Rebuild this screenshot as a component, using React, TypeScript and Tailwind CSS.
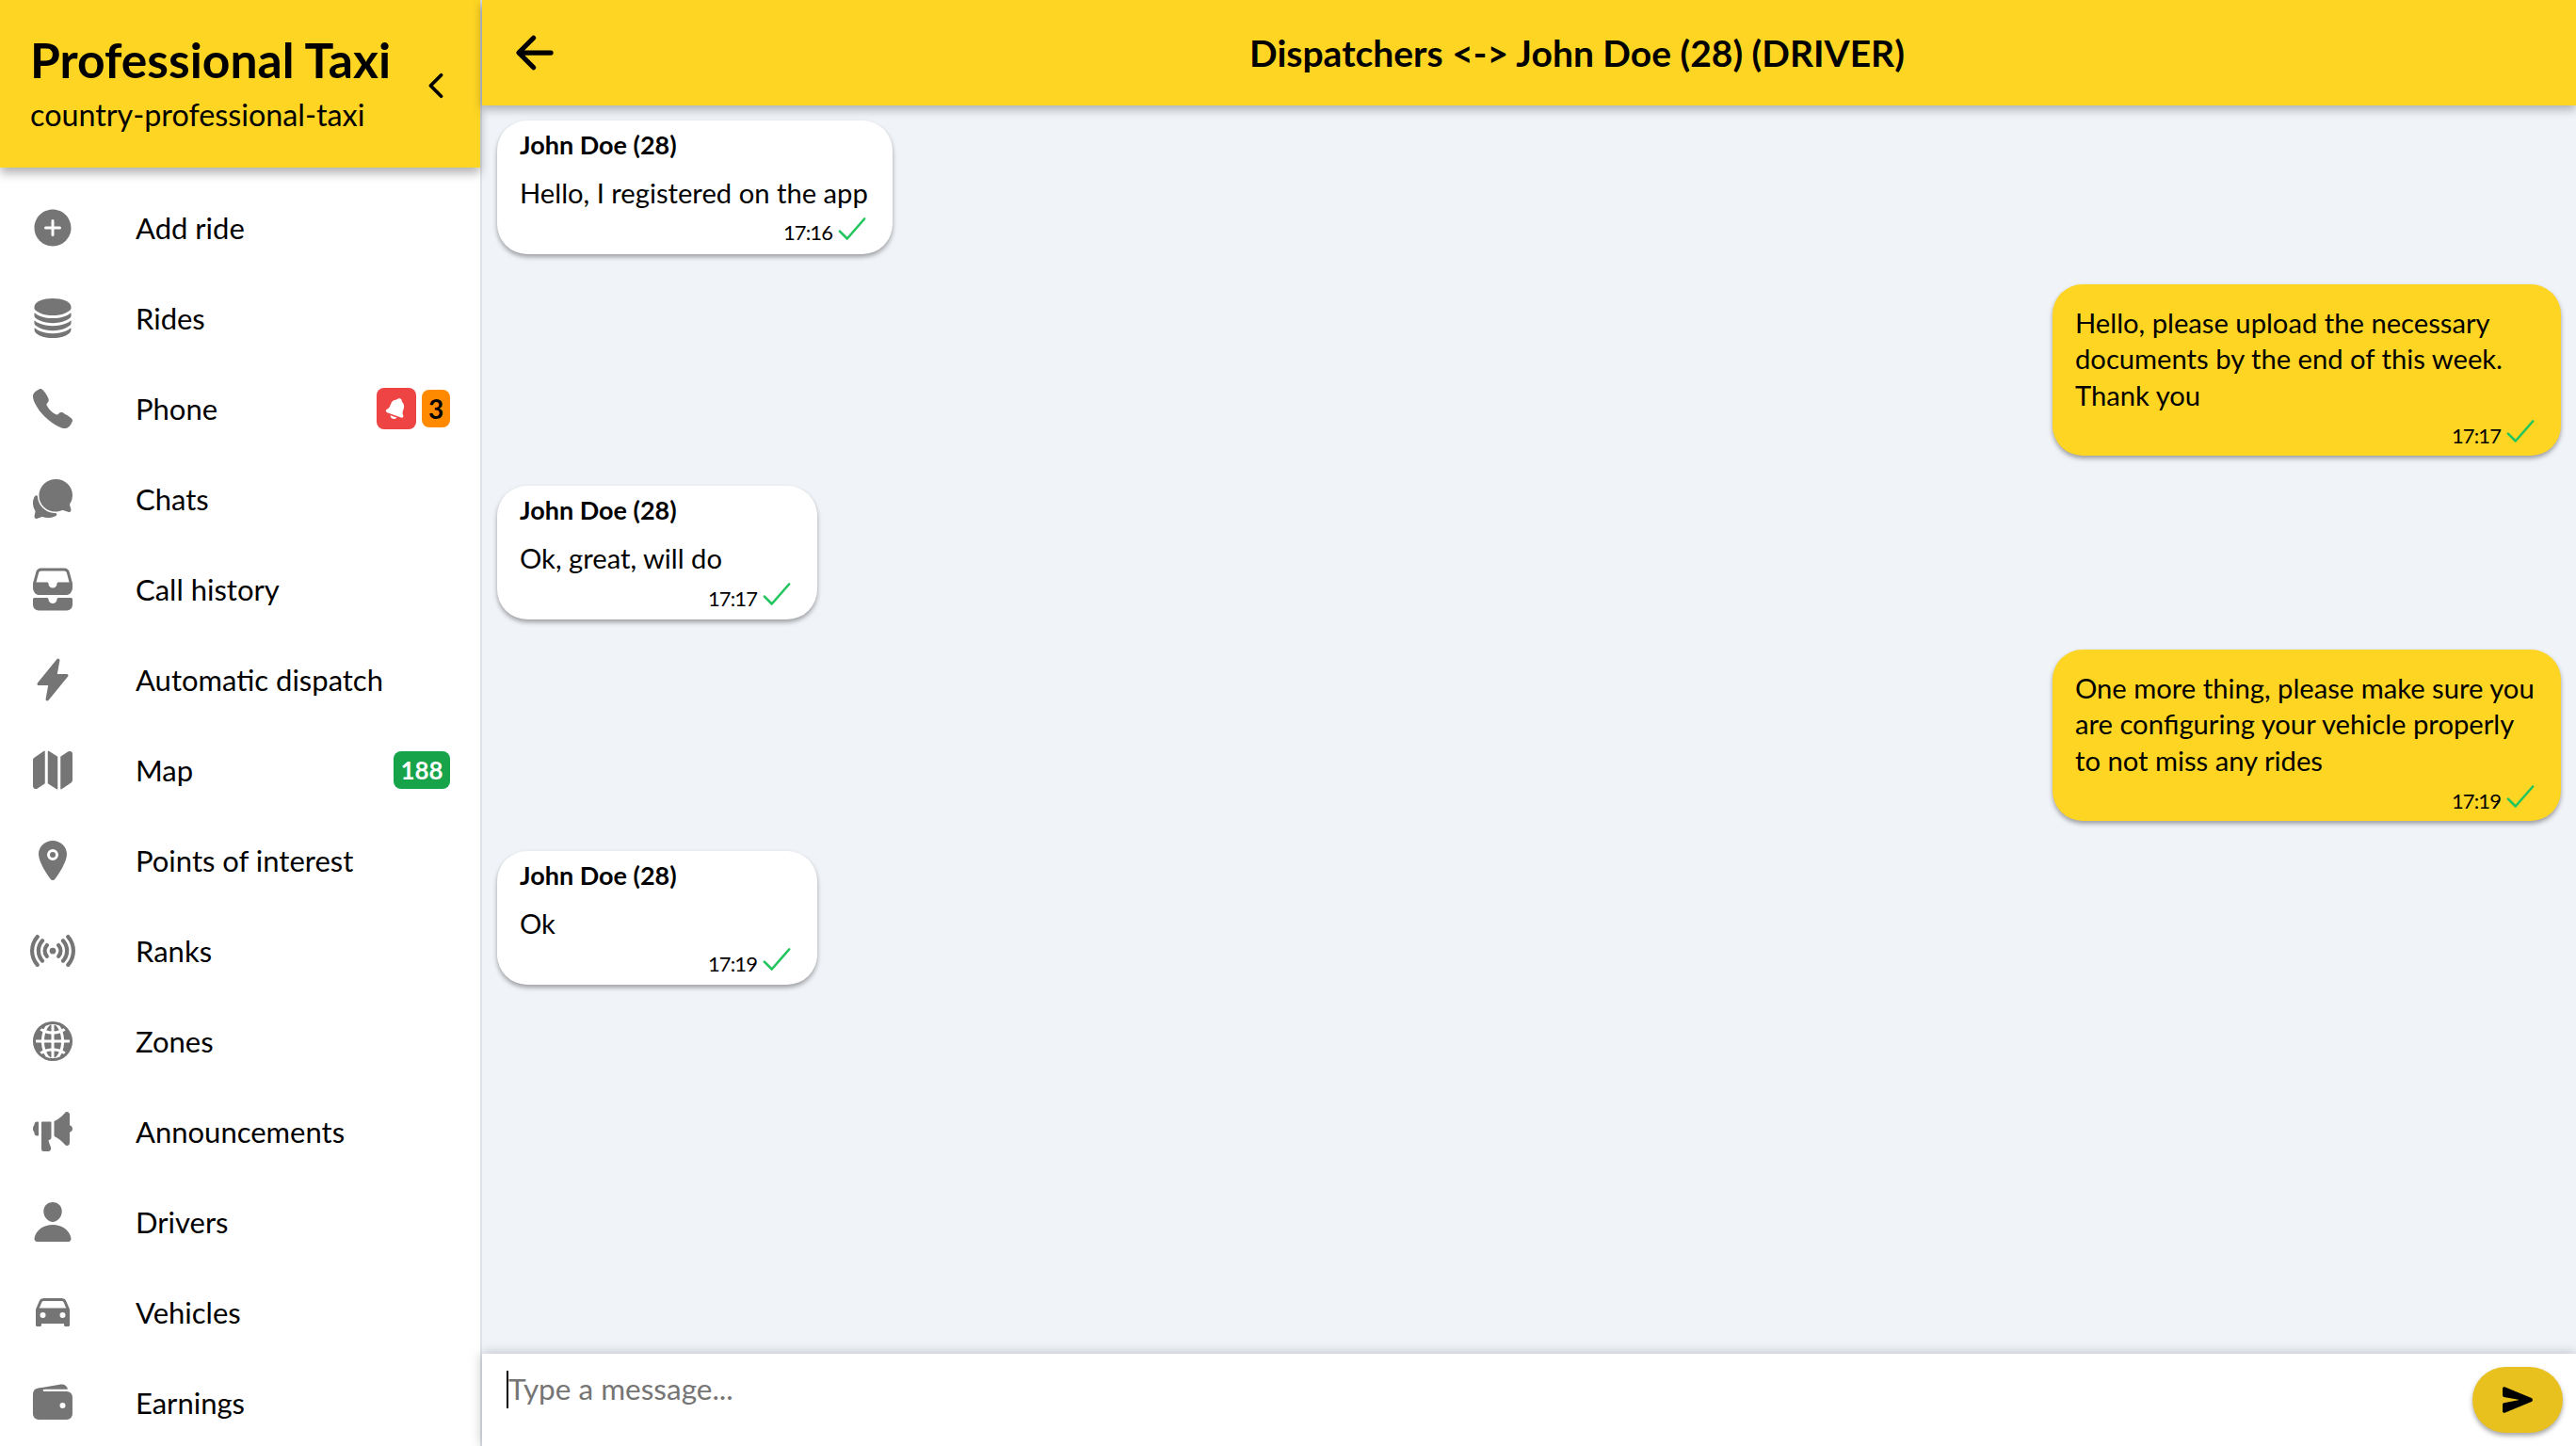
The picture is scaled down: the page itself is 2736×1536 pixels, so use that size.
import type { ReactNode } from "react";
import {
  IoAddCircle,
  IoArrowBack,
  IoCall,
  IoCar,
  IoChatbubbles,
  IoCheckmark,
  IoChevronBack,
  IoFileTrayStacked,
  IoFlash,
  IoGlobe,
  IoLocation,
  IoMap,
  IoMegaphone,
  IoNotifications,
  IoPerson,
  IoRadio,
  IoSend,
  IoServer,
  IoWallet,
} from "react-icons/io5";

const navItems: { label: string; icon: ReactNode; extra?: ReactNode }[] = [
  { label: "Add ride", icon: <IoAddCircle size={48} /> },
  { label: "Rides", icon: <IoServer size={48} /> },
  {
    label: "Phone",
    icon: <IoCall size={48} />,
    extra: (
      <div className="flex items-center gap-[6px]">
        <div className="w-[42px] h-[44px] rounded-lg bg-[#ef4444] flex items-center justify-center text-white">
          <IoNotifications size={26} className="rotate-[20deg]" />
        </div>
        <div className="w-[30px] h-[40px] rounded-lg bg-[#ff8a00] flex items-center justify-center text-[28px] font-bold text-black">
          3
        </div>
      </div>
    ),
  },
  { label: "Chats", icon: <IoChatbubbles size={48} /> },
  { label: "Call history", icon: <IoFileTrayStacked size={48} /> },
  { label: "Automatic dispatch", icon: <IoFlash size={48} /> },
  {
    label: "Map",
    icon: <IoMap size={48} />,
    extra: (
      <div className="w-[60px] h-[40px] rounded-lg bg-[#16a34a] flex items-center justify-center text-[26px] font-bold text-white">
        188
      </div>
    ),
  },
  { label: "Points of interest", icon: <IoLocation size={48} /> },
  { label: "Ranks", icon: <IoRadio size={48} /> },
  { label: "Zones", icon: <IoGlobe size={48} /> },
  { label: "Announcements", icon: <IoMegaphone size={48} /> },
  { label: "Drivers", icon: <IoPerson size={48} /> },
  { label: "Vehicles", icon: <IoCar size={48} /> },
  { label: "Earnings", icon: <IoWallet size={48} /> },
];

const messages = [
  { id: 1, mine: false, width: "w-[420px]", time: "17:16", lines: ["Hello, I registered on the app"] },
  {
    id: 2,
    mine: true,
    width: "w-[540px]",
    time: "17:17",
    lines: ["Hello, please upload the necessary", "documents by the end of this week.", "Thank you"],
  },
  { id: 3, mine: false, width: "w-[340px]", time: "17:17", lines: ["Ok, great, will do"] },
  {
    id: 4,
    mine: true,
    width: "w-[540px]",
    time: "17:19",
    lines: ["One more thing, please make sure you", "are configuring your vehicle properly", "to not miss any rides"],
  },
  { id: 5, mine: false, width: "w-[340px]", time: "17:19", lines: ["Ok"] },
];

const App = () => {
  return (
    <div className="h-screen w-full flex overflow-hidden bg-[#f0f3f8] text-black font-[Lato,sans-serif]">
      {/* sidebar */}
      <aside className="w-[512px] shrink-0 flex flex-col bg-white border-r-2 border-[#dfe3e9]">
        <div className="relative z-10 h-[178px] shrink-0 flex items-center justify-between bg-[#ffd524] pl-[32px] pr-[27px] shadow-[0_6px_10px_rgba(0,0,0,0.3)]">
          <div className="pb-[3px]">
            <div className="text-[51.6px] leading-[60px] font-bold whitespace-nowrap">Professional Taxi</div>
            <div className="text-[32.3px] leading-[42px] mt-[8px] whitespace-nowrap">country-professional-taxi</div>
          </div>
          <IoChevronBack size={40} className="shrink-0 mt-[4px]" />
        </div>
        <nav className="pt-[16px]">
          {navItems.map((item) => (
            <div key={item.label} className="h-[96px] flex items-center pl-[32px] pr-[32px]">
              <div className="w-[48px] h-[48px] text-[#757575] shrink-0">{item.icon}</div>
              <span className="ml-[64px] flex-1 text-[31px] whitespace-nowrap">{item.label}</span>
              {item.extra}
            </div>
          ))}
        </nav>
      </aside>

      {/* chat */}
      <main className="flex-1 min-w-0 flex flex-col">
        <header className="relative z-10 h-[112px] shrink-0 flex items-center bg-[#ffd524] shadow-[0_4px_10px_rgba(0,0,0,0.3)]">
          <div className="w-[102px] pl-[28px] shrink-0">
            <IoArrowBack size={56} />
          </div>
          <h1 className="flex-1 text-center text-[39px] font-bold">Dispatchers &lt;-&gt; John Doe (28) (DRIVER)</h1>
        </header>

        <div className="flex-1 min-h-0 flex flex-col gap-[32px] p-[16px] overflow-hidden">
          {messages.map((m) => (
            <div
              key={m.id}
              className={`${m.width} ${
                m.mine ? "self-end bg-[#ffd524] pt-[22px] pb-[4px]" : "self-start bg-white pt-[7px] pb-[5px]"
              } rounded-[32px] px-[24px] shadow-[0_3px_5px_rgba(0,0,0,0.35)]`}
            >
              {!m.mine && <div className="text-[27px] leading-[38px] font-bold">John Doe (28)</div>}
              <div className={`text-[29.2px] leading-[38.4px] ${m.mine ? "" : "mt-[12.5px]"}`}>
                {m.lines.map((line) => (
                  <div key={line} className="whitespace-nowrap">
                    {line}
                  </div>
                ))}
              </div>
              <div className="h-[44px] -mt-[3px] flex justify-end items-center -mr-[2px]">
                <span className="text-[22px] tracking-[-0.9px] mt-[8px] mr-[2px]">{m.time}</span>
                <IoCheckmark size={42} className="text-[#22c55e] -ml-[2px]" />
              </div>
            </div>
          ))}
        </div>

        <div className="relative z-10 h-[98px] shrink-0 flex items-start bg-white shadow-[0_0_12px_rgba(0,0,0,0.25)] pl-[26px] pr-[14px]">
          <div className="w-[2px] h-[40px] bg-black mt-[18px] shrink-0" />
          <input
            readOnly
            placeholder="Type a message..."
            className="flex-1 h-[40px] mt-[18px] text-[31.5px] outline-none placeholder:text-[#757575]"
          />
          <button className="w-[96px] h-[70px] mt-[14px] rounded-full bg-[#e9c11f] flex items-center justify-center shadow-[0_3px_5px_rgba(0,0,0,0.35)]">
            <IoSend size={34} />
          </button>
        </div>
      </main>
    </div>
  );
};

export default App;
